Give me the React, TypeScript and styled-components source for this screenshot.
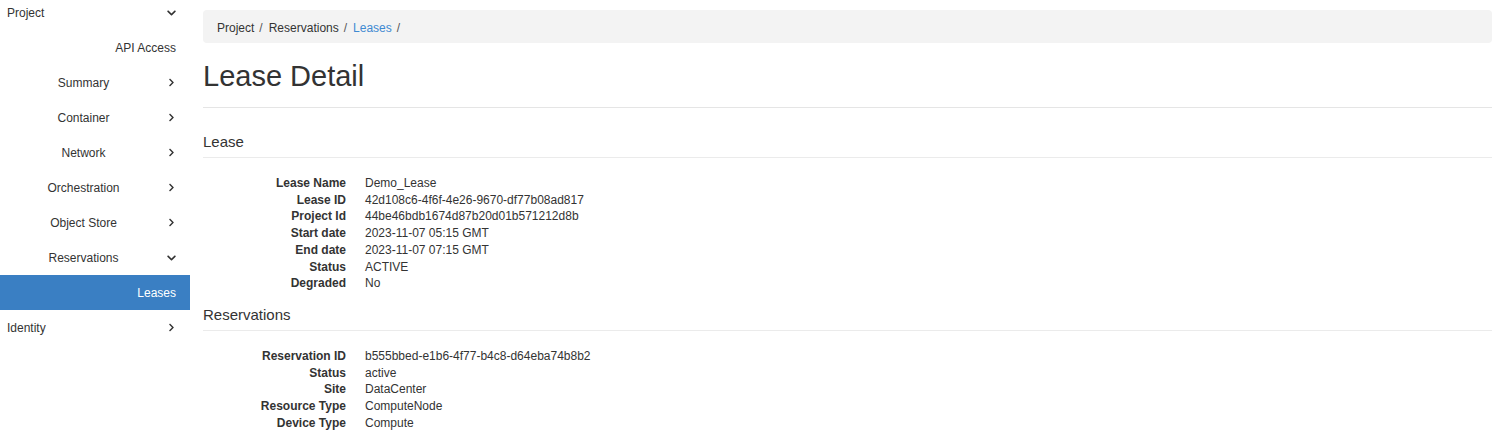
import styled, { createGlobalStyle } from "styled-components";
import { FaChevronDown, FaChevronRight } from "react-icons/fa";

const Global = createGlobalStyle`
  html, body {
    margin: 0;
    padding: 0;
    background: #fff;
    color: #333;
    font-family: "Liberation Sans", Arial, Helvetica, sans-serif;
    font-size: 12px;
  }
`;

const Page = styled.div`
  display: grid;
  grid-template-columns: 190px 1fr;
  column-gap: 13px;
  padding-right: 8px;
  height: 442px;
  overflow: hidden;
`;

const Side = styled.nav`
  display: flex;
  flex-direction: column;
  margin-top: -5px;
`;

const Row = styled.div<{ $kind: "top" | "sub" | "leaf"; $active?: boolean }>`
  display: flex;
  align-items: center;
  height: 35px;
  padding: ${(p) => (p.$kind === "top" ? "0 14px 0 7px" : "0 14px 0 0")};
  background: ${(p) => (p.$active ? "#3a7fc3" : "transparent")};
  color: ${(p) => (p.$active ? "#fff" : "#333")};
  font-size: 12px;
`;

const RowLabel = styled.span<{ $align: "left" | "center" | "right" }>`
  flex: 1;
  text-align: ${(p) => p.$align};
`;

const Chevron = styled.span`
  display: flex;
  justify-content: flex-end;
  width: 9px;
  color: #333;
`;

const Main = styled.main`
  display: flex;
  flex-direction: column;
`;

const Crumbs = styled.ol`
  list-style: none;
  margin: 10px 0 0;
  padding: 3px 14px 0;
  height: 33px;
  box-sizing: border-box;
  display: flex;
  align-items: center;
  background: #f3f3f3;
  border-radius: 4px;
`;

const Crumb = styled.li<{ $link?: boolean }>`
  color: ${(p) => (p.$link ? "#3f8ad2" : "#333")};
  &::after {
    content: "/";
    color: #555;
    padding: 0 6px 0 5px;
  }
`;

const Title = styled.h1`
  margin: 17px 0 0;
  padding-bottom: 15px;
  border-bottom: 1px solid #e5e5e5;
  font-size: 29px;
  font-weight: 400;
  line-height: 32px;
`;

const SectionHead = styled.h3<{ $top: number }>`
  margin: ${(p) => p.$top}px 0 0;
  padding-bottom: 7px;
  border-bottom: 1px solid #ebebeb;
  font-size: 15px;
  font-weight: 400;
  line-height: 17px;
`;

const Props = styled.dl`
  display: grid;
  grid-template-columns: 143px 1fr;
  column-gap: 19px;
  margin: 17px 0 0;
  line-height: 16.7px;
`;

const Key = styled.dt`
  font-weight: 700;
  text-align: right;
`;

const Val = styled.dd`
  margin: 0;
`;

const nav: { label: string; kind: "top" | "sub" | "leaf"; chevron?: "down" | "right"; active?: boolean }[] = [
  { label: "Project", kind: "top", chevron: "down" },
  { label: "API Access", kind: "leaf" },
  { label: "Summary", kind: "sub", chevron: "right" },
  { label: "Container", kind: "sub", chevron: "right" },
  { label: "Network", kind: "sub", chevron: "right" },
  { label: "Orchestration", kind: "sub", chevron: "right" },
  { label: "Object Store", kind: "sub", chevron: "right" },
  { label: "Reservations", kind: "sub", chevron: "down" },
  { label: "Leases", kind: "leaf", active: true },
  { label: "Identity", kind: "top", chevron: "right" },
];

const lease: [string, string][] = [
  ["Lease Name", "Demo_Lease"],
  ["Lease ID", "42d108c6-4f6f-4e26-9670-df77b08ad817"],
  ["Project Id", "44be46bdb1674d87b20d01b571212d8b"],
  ["Start date", "2023-11-07 05:15 GMT"],
  ["End date", "2023-11-07 07:15 GMT"],
  ["Status", "ACTIVE"],
  ["Degraded", "No"],
];

const reservation: [string, string][] = [
  ["Reservation ID", "b555bbed-e1b6-4f77-b4c8-d64eba74b8b2"],
  ["Status", "active"],
  ["Site", "DataCenter"],
  ["Resource Type", "ComputeNode"],
  ["Device Type", "Compute"],
];

function PropList({ items }: { items: [string, string][] }) {
  return (
    <Props>
      {items.map(([k, v]) => (
        <>
          <Key key={k}>{k}</Key>
          <Val key={k + "-v"}>{v}</Val>
        </>
      ))}
    </Props>
  );
}

export default function App() {
  return (
    <>
      <Global />
      <Page>
        <Side>
          {nav.map((n) => (
            <Row key={n.label} $kind={n.kind} $active={n.active}>
              <RowLabel $align={n.kind === "top" ? "left" : n.kind === "sub" ? "center" : "right"}>
                {n.label}
              </RowLabel>
              {n.chevron && (
                <Chevron>
                  {n.chevron === "down" ? <FaChevronDown size={10} /> : <FaChevronRight size={9} />}
                </Chevron>
              )}
            </Row>
          ))}
        </Side>
        <Main>
          <Crumbs>
            <Crumb>Project</Crumb>
            <Crumb>Reservations</Crumb>
            <Crumb $link>Leases</Crumb>
          </Crumbs>
          <Title>Lease Detail</Title>
          <SectionHead $top={25}>Lease</SectionHead>
          <PropList items={lease} />
          <SectionHead $top={14}>Reservations</SectionHead>
          <PropList items={reservation} />
        </Main>
      </Page>
    </>
  );
}
